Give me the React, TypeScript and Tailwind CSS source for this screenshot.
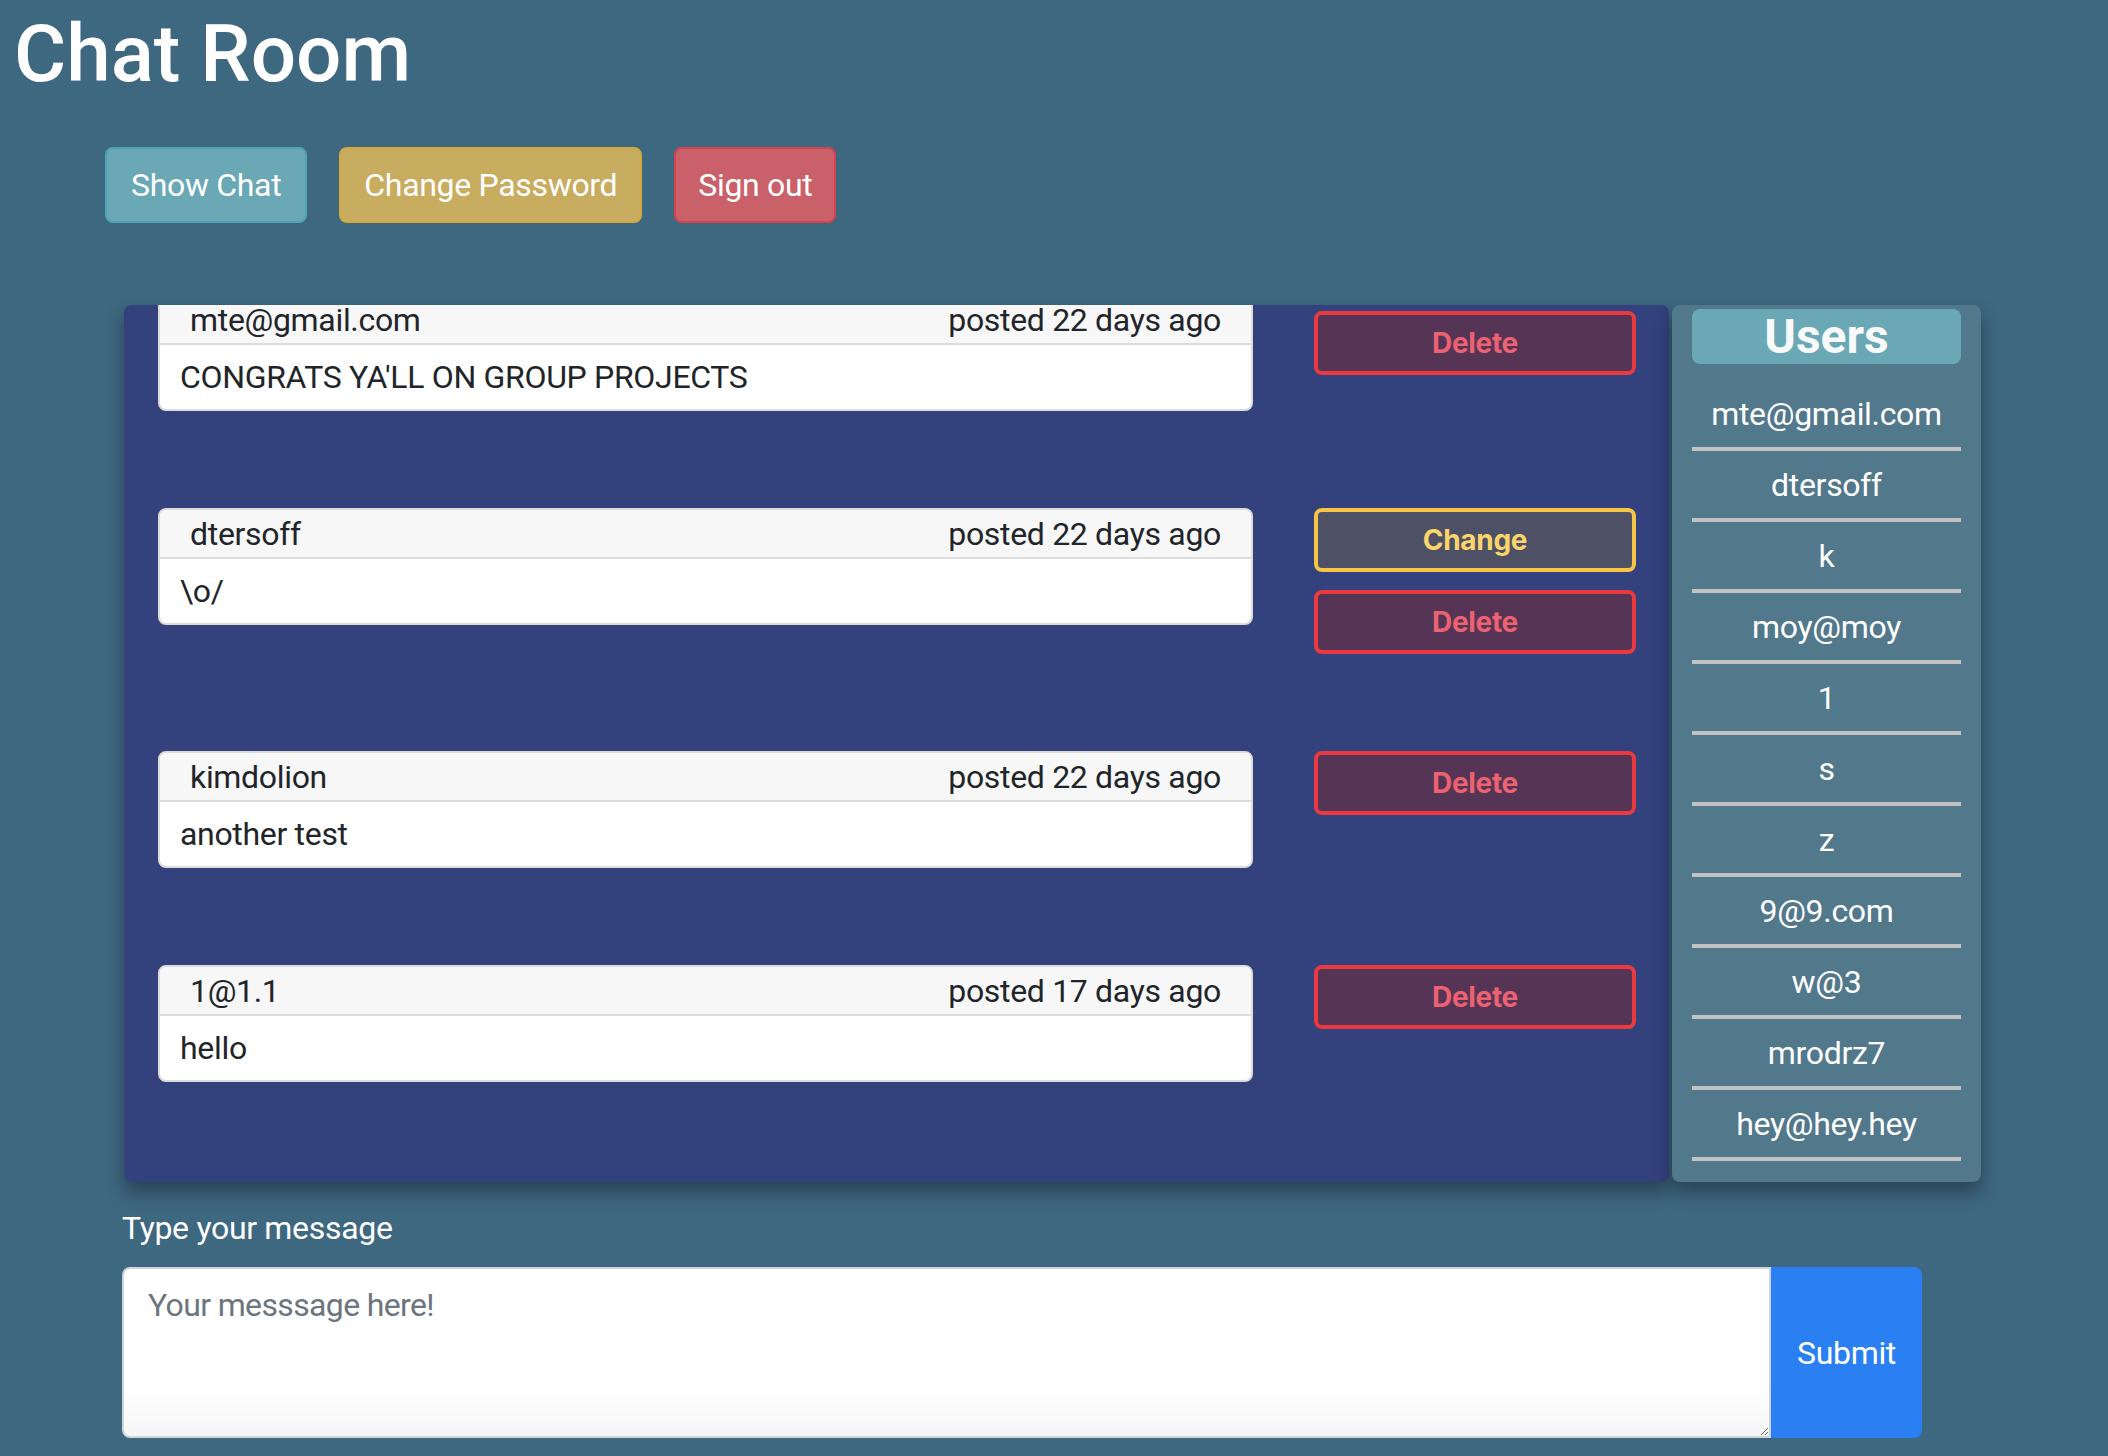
import React, { useLayoutEffect, useRef } from "react";

type Msg = { user: string; when: string; text: string; canChange: boolean };

const messages: Msg[] = [
  { user: "mte@gmail.com", when: "posted 22 days ago", text: "CONGRATS YA'LL ON GROUP PROJECTS", canChange: false },
  { user: "dtersoff", when: "posted 22 days ago", text: "\\o/", canChange: true },
  { user: "kimdolion", when: "posted 22 days ago", text: "another test", canChange: false },
  { user: "1@1.1", when: "posted 17 days ago", text: "hello", canChange: false },
];

const users = ["mte@gmail.com", "dtersoff", "k", "moy@moy", "1", "s", "z", "9@9.com", "w@3", "mrodrz7", "hey@hey.hey"];

export default function App() {
  const scrollRef = useRef<HTMLDivElement>(null);
  useLayoutEffect(() => {
    if (scrollRef.current) scrollRef.current.scrollTop = 13;
  }, []);

  return (
    <div className="min-h-screen w-full bg-[#3e6780] font-['Roboto',sans-serif] tracking-[-0.02em] text-white">
      <h1 className="pl-[14px] pt-[6px] text-[80px] leading-[96px] font-medium tracking-normal">Chat Room</h1>

      <div className="mt-[45px] flex gap-[32px] pl-[105px]">
        <button className="h-[76px] rounded-[8px] border-2 border-[#4ea4b5] bg-[#6aa8b5] px-[24px] text-[32px] text-white">Show Chat</button>
        <button className="h-[76px] rounded-[8px] border-2 border-[#d3a83e] bg-[#c8ac5f] px-[23px] text-[32px] text-white">Change Password</button>
        <button className="h-[76px] rounded-[8px] border-2 border-[#d8424e] bg-[#ca606a] px-[22px] text-[32px] text-white">Sign out</button>
      </div>

      <div className="mt-[82px] flex gap-[3px] pl-[124px]">
        <div
          ref={scrollRef}
          className="h-[877px] w-[1545px] overflow-hidden rounded-[8px] bg-[#33417c] shadow-[0_10px_18px_rgba(0,0,0,0.35)]"
        >
          <div className="flex flex-col gap-[97px] pb-[100px] pl-[34px] pr-[33px]">
            {messages.map((m, i) => (
              <div key={i} className="flex items-start gap-[61px]">
                <div className="w-[1095px] overflow-hidden rounded-[8px] border-2 border-[#dcdcdc] bg-white text-[32px] text-[#212529]">
                  <div className="flex h-[49px] items-center justify-between border-b-2 border-[#dcdcdc] bg-[#f7f7f7] px-[30px]">
                    <span className="leading-[32px]">{m.user}</span>
                    <span className="leading-[32px]">{m.when}</span>
                  </div>
                  <div className="flex h-[64px] items-center px-[20px]">{m.text}</div>
                </div>
                <div className={`flex w-[322px] flex-col gap-[18px] font-['Inter',sans-serif] ${i === 0 ? "mt-[17px]" : ""}`}>
                  {m.canChange && (
                    <button className="h-[64px] rounded-[8px] border-[4px] border-[#f8c445] bg-[#4e5066] text-[28px] font-bold text-[#fbd56a]">Change</button>
                  )}
                  <button className="h-[64px] rounded-[8px] border-[4px] border-[#ea3a40] bg-[#563456] text-[28px] font-bold text-[#ec6270]">Delete</button>
                </div>
              </div>
            ))}
          </div>
        </div>

        <div className="h-[877px] w-[309px] overflow-hidden rounded-[8px] bg-[#52788c] px-[20px] pt-[4px] shadow-[0_10px_18px_rgba(0,0,0,0.35)]">
          <div className="flex h-[55px] items-center justify-center rounded-[8px] bg-[#6ba8b5] text-[48px] font-bold tracking-normal text-[#f8f9fa]">Users</div>
          <div className="mt-[16px]">
            {users.map((u) => (
              <div key={u}>
                <div className="flex h-[67px] items-center justify-center text-[32px] text-white">{u}</div>
                <div className="h-[4px] bg-[#c2c2c2]" />
              </div>
            ))}
          </div>
        </div>
      </div>

      <div className="pl-[122px] pt-[22px]">
        <label className="block text-[32px] leading-[48px] text-white">Type your message</label>
        <div className="mt-[15px] flex w-[1800px]">
          <textarea
            placeholder="Your messsage here!"
            className="h-[171px] w-[1649px] rounded-l-[8px] border-2 border-[#ced4da] bg-gradient-to-b from-white from-70% to-[#f6f6f6] px-[24px] py-[12px] text-[32px] tracking-[-0.02em] text-[#495057] placeholder:text-[#6c757d] outline-none"
          />
          <button className="h-[171px] w-[151px] rounded-r-[8px] bg-[#2a7ff3] text-[32px] text-white">Submit</button>
        </div>
      </div>
    </div>
  );
}
